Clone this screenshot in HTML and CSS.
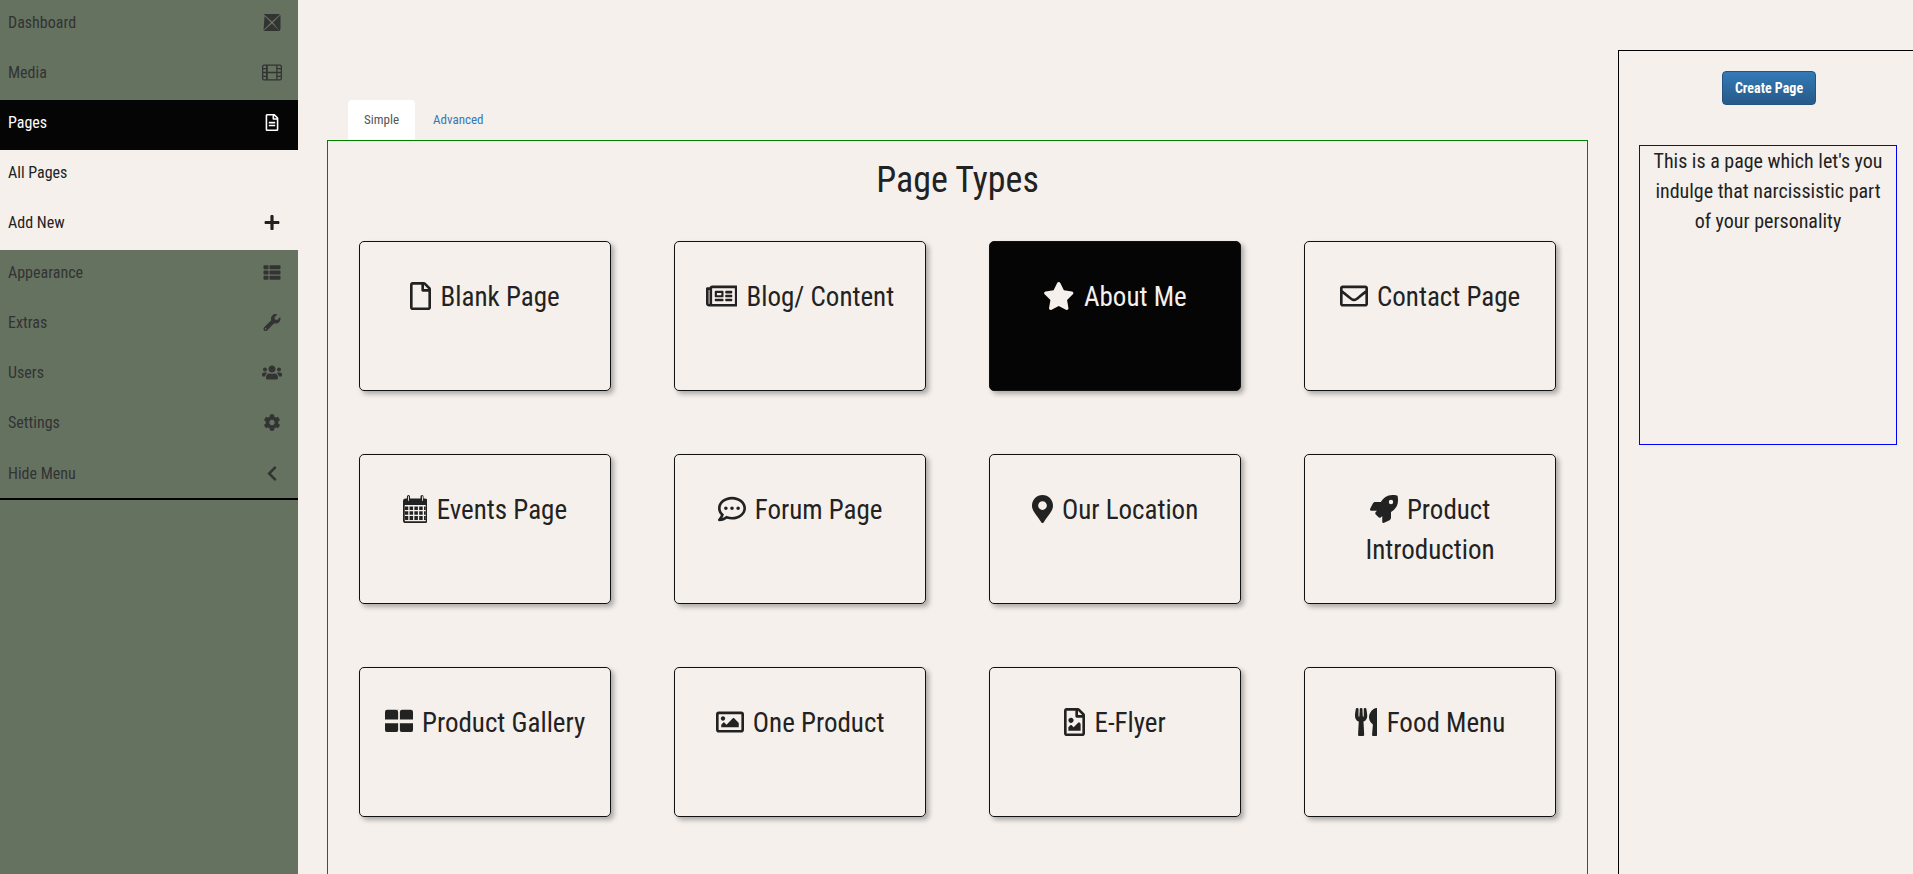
FILE: index.html
```html
<!DOCTYPE html>
<html lang="en">
<head>
    <meta charset="UTF-8">
    <title>Page Types</title>
    <link rel="stylesheet" href="styles.css">
</head>
<body>
    <!-- Side menu -->
    <nav class="sidebar">
        <a class="menu-item">Dashboard
            <svg class="menu-icon" viewBox="0 0 16 16"><path d="M0 0L8 7L15 1V0zM16 1L9 8L15 16L16 14zM15 16L8 9L0 16zM0 15L7 8L1 2z"/></svg>
        </a>
        <a class="menu-item">Media
            <svg class="menu-icon wide" viewBox="0 0 20 16"><path d="M2 0h16a2 2 0 0 1 2 2v12a2 2 0 0 1-2 2H2a2 2 0 0 1-2-2V2a2 2 0 0 1 2-2zm0 1.300a.7.7 0 0 0-.7.7v1.400H4V1.300zm3.800 0v6h8.400v-6zm9.700 0v2.100h3.200V2a.7.7 0 0 0-.7-.7zM1.300 4.700v2.600H4V4.700zm14.200 0v2.600h3.200V4.700zM1.300 8.700v2.600H4V8.700zm4.500 0v6h8.400v-6zm9.700 0v2.600h3.200V8.700zm-14.200 3.900V14a.7.7 0 0 0 .7.7h2v-2.100zm14.200 0v2.100H18a.7.7 0 0 0 .7-.7v-1.400z"/></svg>
        </a>
        <a class="menu-item active">Pages
            <svg class="menu-icon" viewBox="0 0 384 512"><path d="M288 248v28c0 6.600-5.400 12-12 12H108c-6.600 0-12-5.400-12-12v-28c0-6.600 5.400-12 12-12h168c6.600 0 12 5.400 12 12zm-12 72H108c-6.600 0-12 5.400-12 12v28c0 6.600 5.400 12 12 12h168c6.600 0 12-5.400 12-12v-28c0-6.600-5.400-12-12-12zm108-188.100V464c0 26.500-21.500 48-48 48H48c-26.500 0-48-21.500-48-48V48C0 21.500 21.500 0 48 0h204.100C264.800 0 277 5.100 286 14.100L369.900 98c9 8.900 14.100 21.200 14.100 33.900zm-128-80V128h76.100L256 51.900zM336 464V176H232c-13.300 0-24-10.700-24-24V48H48v416h288z"/></svg>
        </a>
        <a class="menu-item sub">All Pages</a>
        <a class="menu-item sub">Add New
            <svg class="menu-icon" viewBox="0 0 448 512"><path d="M416 208H272V64c0-17.670-14.330-32-32-32h-32c-17.670 0-32 14.330-32 32v144H32c-17.670 0-32 14.330-32 32v32c0 17.670 14.330 32 32 32h144v144c0 17.670 14.330 32 32 32h32c17.670 0 32-14.330 32-32V304h144c17.670 0 32-14.330 32-32v-32c0-17.670-14.330-32-32-32z"/></svg>
        </a>
        <a class="menu-item">Appearance
            <svg class="menu-icon wide" viewBox="0 0 512 512"><path d="M0 60a20 20 0 0 1 20-20h110a20 20 0 0 1 20 20v76a20 20 0 0 1-20 20H20a20 20 0 0 1-20-20zm180 0a20 20 0 0 1 20-20h292a20 20 0 0 1 20 20v76a20 20 0 0 1-20 20H200a20 20 0 0 1-20-20zM0 218a20 20 0 0 1 20-20h110a20 20 0 0 1 20 20v76a20 20 0 0 1-20 20H20a20 20 0 0 1-20-20zm180 0a20 20 0 0 1 20-20h292a20 20 0 0 1 20 20v76a20 20 0 0 1-20 20H200a20 20 0 0 1-20-20zM0 376a20 20 0 0 1 20-20h110a20 20 0 0 1 20 20v76a20 20 0 0 1-20 20H20a20 20 0 0 1-20-20zm180 0a20 20 0 0 1 20-20h292a20 20 0 0 1 20 20v76a20 20 0 0 1-20 20H200a20 20 0 0 1-20-20z"/></svg>
        </a>
        <a class="menu-item">Extras
            <svg class="menu-icon" viewBox="0 0 512 512"><path d="M507.730 109.100c-2.240-9.030-13.540-12.090-20.120-5.510l-74.360 74.360-67.880-11.310-11.310-67.880 74.360-74.360c6.620-6.620 3.430-17.900-5.660-20.160-47.380-11.740-99.550.91-136.580 37.930-39.640 39.640-50.550 97.100-34.050 147.200L18.740 402.760c-24.990 24.990-24.990 65.510 0 90.500 24.990 24.990 65.510 24.990 90.500 0l213.210-213.210c50.120 16.710 107.470 5.680 147.370-34.220 37.070-37.070 49.700-89.320 37.910-136.730zM64 472c-13.250 0-24-10.750-24-24 0-13.260 10.750-24 24-24s24 10.740 24 24c0 13.250-10.750 24-24 24z"/></svg>
        </a>
        <a class="menu-item">Users
            <svg class="menu-icon wide" viewBox="0 0 640 512"><path d="M96 224c35.300 0 64-28.700 64-64s-28.700-64-64-64-64 28.700-64 64 28.700 64 64 64zm448 0c35.300 0 64-28.700 64-64s-28.700-64-64-64-64 28.700-64 64 28.700 64 64 64zm32 32h-64c-17.600 0-33.500 7.100-45.100 18.600 40.300 22.100 68.900 62 75.100 109.400h66c17.700 0 32-14.300 32-32v-32c0-35.300-28.700-64-64-64zm-256 0c61.900 0 112-50.100 112-112S381.900 32 320 32 208 82.100 208 144s50.100 112 112 112zm76.800 32h-8.300c-20.800 10-43.900 16-68.500 16s-47.600-6-68.500-16h-8.300C179.600 288 128 339.600 128 403.200V432c0 26.500 21.500 48 48 48h288c26.500 0 48-21.500 48-48v-28.800c0-63.600-51.600-115.200-115.200-115.200zm-223.700-13.400C161.500 263.100 145.600 256 128 256H64c-35.300 0-64 28.700-64 64v32c0 17.700 14.300 32 32 32h65.900c6.300-47.400 34.900-87.300 75.200-109.400z"/></svg>
        </a>
        <a class="menu-item">Settings
            <svg class="menu-icon" viewBox="0 0 512 512"><path d="M487.400 315.700l-42.600-24.600c4.300-23.200 4.300-47 0-70.200l42.600-24.600c4.900-2.800 7.100-8.600 5.500-14-11.100-35.600-30-67.800-54.700-94.600-3.800-4.100-10-5.100-14.800-2.300L380.800 110c-17.900-15.400-38.500-27.300-60.800-35.100V25.800c0-5.600-3.900-10.500-9.400-11.700-36.700-8.200-74.300-7.800-109.200 0-5.500 1.200-9.400 6.100-9.400 11.700V75c-22.200 7.900-42.800 19.800-60.800 35.100L88.700 85.500c-4.900-2.800-11-1.900-14.800 2.300-24.700 26.700-43.600 58.900-54.700 94.600-1.700 5.400.6 11.200 5.500 14L67.300 221c-4.300 23.200-4.300 47 0 70.200l-42.600 24.600c-4.900 2.800-7.100 8.600-5.500 14 11.100 35.600 30 67.800 54.700 94.600 3.800 4.100 10 5.100 14.800 2.300l42.600-24.600c17.900 15.400 38.500 27.300 60.800 35.100v49.200c0 5.600 3.900 10.500 9.400 11.700 36.700 8.200 74.300 7.800 109.200 0 5.500-1.200 9.400-6.100 9.400-11.700v-49.200c22.200-7.900 42.800-19.800 60.800-35.100l42.600 24.600c4.900 2.800 11 1.900 14.800-2.300 24.700-26.700 43.600-58.900 54.700-94.600 1.500-5.500-.7-11.300-5.600-14.100zM256 336c-44.100 0-80-35.900-80-80s35.900-80 80-80 80 35.900 80 80-35.900 80-80 80z"/></svg>
        </a>
        <a class="menu-item last">Hide Menu
            <svg class="menu-icon" viewBox="0 0 320 512"><path d="M34.520 239.030L228.870 44.690c9.370-9.370 24.570-9.370 33.940 0l22.670 22.670c9.360 9.360 9.370 24.520.04 33.900L131.490 256l154.020 154.750c9.340 9.380 9.320 24.540-.04 33.900l-22.670 22.670c-9.370 9.370-24.570 9.370-33.940 0L34.520 272.970c-9.370-9.370-9.370-24.570 0-33.940z"/></svg>
        </a>
    </nav>

    <!-- Page types -->
    <main class="main">
        <ul class="tabs">
            <li class="tab active">Simple</li>
            <li class="tab">Advanced</li>
        </ul>
        <section class="panel">
            <h2 class="panel-title">Page Types</h2>
            <div class="type-grid">
                <div class="type-card"><svg class="type-icon" viewBox="0 0 384 512"><path d="M369.900 97.900L286 14C277 5 264.800-.1 252.100-.1H48C21.500 0 0 21.500 0 48v416c0 26.500 21.500 48 48 48h288c26.500 0 48-21.500 48-48V131.900c0-12.700-5.100-25-14.100-34zM332.100 128H256V51.900l76.100 76.100zM48 464V48h160v104c0 13.300 10.700 24 24 24h104v288H48z"/></svg> Blank Page</div>
                <div class="type-card"><svg class="type-icon" viewBox="0 0 576 512"><path d="M552 64H112c-20.858 0-38.643 13.377-45.248 32H24c-13.255 0-24 10.745-24 24v272c0 30.928 25.072 56 56 56h496c13.255 0 24-10.745 24-24V88c0-13.255-10.745-24-24-24zM48 392V144h16v248c0 4.411-3.589 8-8 8s-8-3.589-8-8zm480 8H111.422c.374-2.614.578-5.283.578-8V112h416v288zM172 280h136c6.627 0 12-5.373 12-12v-96c0-6.627-5.373-12-12-12H172c-6.627 0-12 5.373-12 12v96c0 6.627 5.373 12 12 12zm28-80h80v40h-80v-40zm-40 140v-24c0-6.627 5.373-12 12-12h136c6.627 0 12 5.373 12 12v24c0 6.627-5.373 12-12 12H172c-6.627 0-12-5.373-12-12zm192 0v-24c0-6.627 5.373-12 12-12h104c6.627 0 12 5.373 12 12v24c0 6.627-5.373 12-12 12H364c-6.627 0-12-5.373-12-12zm0-144v-24c0-6.627 5.373-12 12-12h104c6.627 0 12 5.373 12 12v24c0 6.627-5.373 12-12 12H364c-6.627 0-12-5.373-12-12zm0 72v-24c0-6.627 5.373-12 12-12h104c6.627 0 12 5.373 12 12v24c0 6.627-5.373 12-12 12H364c-6.627 0-12-5.373-12-12z"/></svg> Blog/ Content</div>
                <div class="type-card selected"><svg class="type-icon" viewBox="0 0 576 512"><path d="M259.300 17.800L194 150.200 47.900 171.500c-26.200 3.800-36.700 36.100-17.700 54.600l105.700 103-25 145.500c-4.500 26.300 23.200 46 46.400 33.700L288 439.600l130.700 68.700c23.200 12.200 50.900-7.400 46.400-33.700l-25-145.500 105.700-103c19-18.500 8.500-50.800-17.700-54.600L382 150.200 316.700 17.800c-11.700-23.600-45.600-23.900-57.400 0z"/></svg> About Me</div>
                <div class="type-card"><svg class="type-icon" viewBox="0 0 512 512"><path d="M464 64H48C21.490 64 0 85.490 0 112v288c0 26.510 21.490 48 48 48h416c26.510 0 48-21.490 48-48V112c0-26.510-21.490-48-48-48zm0 48v40.805c-22.422 18.259-58.168 46.651-134.587 106.490-16.841 13.247-50.201 45.072-73.413 44.701-23.208.375-56.579-31.459-73.413-44.701C106.180 199.465 70.425 171.067 48 152.805V112h416zM48 400V214.398c22.914 18.251 55.409 43.862 104.938 82.646 21.857 17.205 60.134 55.186 103.062 54.955 42.717.231 80.509-37.199 103.053-54.947 49.528-38.783 82.032-64.401 104.947-82.653V400H48z"/></svg> Contact Page</div>

                <div class="type-card"><svg class="type-icon" viewBox="0 0 448 512"><path d="M100 0a28 28 0 0 1 28 28v36h192V28a28 28 0 0 1 56 0v36h24a48 48 0 0 1 48 48v352a48 48 0 0 1-48 48H48a48 48 0 0 1-48-48V112a48 48 0 0 1 48-48h24V28a28 28 0 0 1 28-28zm-8 28v72a8 8 0 0 0 16 0V28a8 8 0 0 0-16 0zm256 0v72a8 8 0 0 0 16 0V28a8 8 0 0 0-16 0zM32 184v280a16 16 0 0 0 16 16h352a16 16 0 0 0 16-16V184zm40 24h24v64H36v-64zm48 0h64v64h-64zm88 0h64v64h-64zm88 0h64v64h-64zm88 0h36v64h-36zM36 296h60v64H36zm84 0h64v64h-64zm88 0h64v64h-64zm88 0h64v64h-64zm88 0h36v64h-36zM36 384h60v72H48a12 12 0 0 1-12-12zm84 0h64v72h-64zm88 0h64v72h-64zm88 0h64v72h-64zm88 0h36v60a12 12 0 0 1-12 12h-24z" fill-rule="evenodd"/></svg> Events Page</div>
                <div class="type-card"><svg class="type-icon" viewBox="0 0 512 512"><path d="M144 208c-17.700 0-32 14.300-32 32s14.300 32 32 32 32-14.300 32-32-14.300-32-32-32zm112 0c-17.700 0-32 14.300-32 32s14.300 32 32 32 32-14.300 32-32-14.300-32-32-32zm112 0c-17.700 0-32 14.300-32 32s14.300 32 32 32 32-14.300 32-32-14.300-32-32-32zM256 32C114.600 32 0 125.100 0 240c0 47.600 19.900 91.200 52.900 126.300C38 405.700 7 439.100 6.500 439.500c-6.600 7-8.400 17.200-4.600 26S14.400 480 24 480c61.500 0 110-25.700 139.100-46.300C192 442.800 223.200 448 256 448c141.400 0 256-93.100 256-208S397.400 32 256 32zm0 368c-26.700 0-53.100-4.100-78.400-12.100l-22.700-7.200-19.500 13.800c-14.300 10.100-33.900 21.400-57.500 29 7.300-12.100 14.400-25.700 19.900-40.200l10.600-28.100-20.600-21.800C69.700 314.100 48 282.200 48 240c0-88.200 93.300-160 208-160s208 71.800 208 160-93.300 160-208 160z"/></svg> Forum Page</div>
                <div class="type-card"><svg class="type-icon" viewBox="0 0 384 512"><path d="M172.268 501.670C26.970 291.031 0 269.413 0 192 0 85.961 85.961 0 192 0s192 85.961 192 192c0 77.413-26.970 99.031-172.268 309.670-9.535 13.774-29.930 13.773-39.464 0zM192 272c44.183 0 80-35.817 80-80s-35.817-80-80-80-80 35.817-80 80 35.817 80 80 80z"/></svg> Our Location</div>
                <div class="type-card"><svg class="type-icon" viewBox="0 0 512 512"><path d="M505.120 19.094c-1.189-5.531-6.658-11-12.207-12.188C460.716 0 435.507 0 410.407 0 307.175 0 245.269 55.203 199.052 128H94.838c-16.348.016-35.557 11.875-42.887 26.484L2.516 253.297A28.400 28.400 0 0 0 0 264a24.009 24.009 0 0 0 24.006 24h103.810l-22.475 22.469c-11.365 11.361-12.996 32.258 0 45.250l50.904 50.906c11.156 11.188 32.156 13.156 45.277 0l22.475-22.469V488a24.009 24.009 0 0 0 24.006 24 28.559 28.559 0 0 0 10.707-2.516l98.728-49.391c14.629-7.297 26.508-26.500 26.508-42.859V312.797c72.598-46.313 128.035-108.406 128.035-211.094C512.075 76.500 512.075 51.297 505.120 19.094zM384.040 168a40 40 0 1 1 40.010-40 40.023 40.023 0 0 1-40.010 40z"/></svg> Product Introduction</div>

                <div class="type-card"><svg class="type-icon" viewBox="0 0 512 512"><path d="M40 32h176a40 40 0 0 1 40 0v0H40zM0 72a40 40 0 0 1 40-40h160a40 40 0 0 1 40 40v136H0zm272 0a40 40 0 0 1 40-40h160a40 40 0 0 1 40 40v136H272zM0 280h240v120a40 40 0 0 1-40 40H40a40 40 0 0 1-40-40zm272 0h240v120a40 40 0 0 1-40 40H312a40 40 0 0 1-40-40z"/></svg> Product Gallery</div>
                <div class="type-card"><svg class="type-icon" viewBox="0 0 512 512"><path d="M464 64H48C21.490 64 0 85.490 0 112v288c0 26.510 21.490 48 48 48h416c26.510 0 48-21.490 48-48V112c0-26.510-21.490-48-48-48zm-6 336H54a6 6 0 0 1-6-6V118a6 6 0 0 1 6-6h404a6 6 0 0 1 6 6v276a6 6 0 0 1-6 6zM128 152c-22.091 0-40 17.909-40 40s17.909 40 40 40 40-17.909 40-40-17.909-40-40-40zM96 352h320v-80l-87.515-87.515c-4.686-4.686-12.284-4.686-16.971 0L192 304l-39.515-39.515c-4.686-4.686-12.284-4.686-16.971 0L96 304v48z"/></svg> One Product</div>
                <div class="type-card"><svg class="type-icon" viewBox="0 0 384 512"><path d="M369.900 97.900L286 14C277 5 264.800-.1 252.100-.1H48C21.500 0 0 21.500 0 48v416c0 26.500 21.500 48 48 48h288c26.500 0 48-21.500 48-48V131.900c0-12.700-5.100-25-14.100-34zM332.100 128H256V51.900l76.100 76.100zM48 464V48h160v104c0 13.300 10.700 24 24 24h104v288H48zm32-48h224V288l-23.500-23.500c-4.700-4.700-12.300-4.700-17 0L176 352l-39.500-39.500c-4.700-4.700-12.300-4.700-17 0L80 352v64zm48-240c-26.500 0-48 21.500-48 48s21.500 48 48 48 48-21.500 48-48-21.500-48-48-48z"/></svg> E-Flyer</div>
                <div class="type-card"><svg class="type-icon" viewBox="0 0 416 512"><path d="M207.900 15.200c.8 4.700 16.100 94.500 16.100 128.800 0 52.300-27.800 89.600-68.900 104.600L168 486.700c.7 13.700-10.200 25.300-24 25.300H80c-13.700 0-24.700-11.500-24-25.300l12.900-238.100C27.700 233.600 0 196.200 0 144 0 109.600 15.300 19.900 16.100 15.200 19.300-5.100 61.400-5.400 64 16.300v141.200c1.300 3.400 15.100 3.200 16 0 1.400-25.300 7.900-139.200 8-141.800 3.300-20.800 44.700-20.800 47.900 0 .2 2.700 6.600 116.500 8 141.800.9 3.200 14.800 3.400 16 0V16.300c2.600-21.600 44.800-21.400 48-1.100zm119.200 285.700l-15 185.100c-1.200 14 9.900 26 23.900 26h56c13.300 0 24-10.700 24-24V24c0-13.200-10.700-24-24-24-82.500 0-221.400 178.500-64.900 300.900z"/></svg> Food Menu</div>
            </div>
        </section>
    </main>

    <!-- Create page column -->
    <aside class="aside">
        <button class="create-btn">Create Page</button>
        <div class="type-info">This is a page which let's you indulge that narcissistic part of your personality</div>
    </aside>
</body>
</html>
```

FILE: styles.css
```css
/* Page */
body {
    margin: 0;
    height: 874px;
    overflow: hidden;
    display: flex;
    background-color: #f5f0ec;
    color: #222;
    font-family: "Roboto Condensed", Roboto, sans-serif;
    font-stretch: 75%;
}

/* Side menu */
.sidebar {
    width: 298px;
    flex-shrink: 0;
    background-color: #657260;
}

.menu-item {
    display: flex;
    justify-content: space-between;
    align-items: center;
    box-sizing: border-box;
    height: 50px;
    padding: 0 16px 6px 8px;
    font-size: 16px;
    color: #333;
}

.menu-item.active {
    background-color: #050505;
    color: #fff;
}

.menu-item.sub {
    background-color: #f5f0ec;
    color: #222;
}

.menu-item.last {
    border-bottom: 2px solid #000;
    padding-bottom: 2px;
}

.menu-icon {
    display: block;
    width: 20px;
    height: 17px;
    fill: currentColor;
}

/* Tabs and panel */
.main {
    flex: 1;
    padding: 100px 30px 0 29px;
}

.tabs {
    display: flex;
    gap: 2px;
    list-style: none;
    margin: 0 0 0 21px;
    padding: 0;
}

.tab {
    height: 40px;
    line-height: 40px;
    padding: 0 16px;
    font-size: 13px;
    color: #337ab7;
}

.tab.active {
    background-color: #fff;
    border-radius: 4px 4px 0 0;
    color: #555;
}

.panel {
    border: 1px solid green;
    height: 900px;
}

.panel-title {
    margin: 0;
    padding: 19px 0 41px;
    text-align: center;
    font-size: 36px;
    line-height: 40px;
    font-weight: 400;
}

.type-grid {
    display: grid;
    grid-template-columns: repeat(4, 252px);
    gap: 63px;
    justify-content: center;
}

.type-card {
    box-sizing: border-box;
    height: 150px;
    padding: 35px 10px 0;
    border: 1px solid #111;
    border-radius: 5px;
    box-shadow: 3px 3px 5px rgba(0, 0, 0, 0.3);
    text-align: center;
    font-size: 27px;
    line-height: 40px;
}

.type-card.selected {
    background-color: #050505;
    color: #f5f0ec;
}

.type-icon {
    width: auto;
    height: 28px;
    margin-right: 3px;
    vertical-align: -4px;
    fill: currentColor;
}

/* Right column */
.aside {
    width: 295px;
    flex-shrink: 0;
    box-sizing: border-box;
    margin-top: 50px;
    padding: 20px 0 0 20px;
    border-left: 1px solid #000;
    border-top: 1px solid #000;
    text-align: center;
}

.create-btn {
    display: block;
    width: 94px;
    height: 34px;
    margin: 0 0 40px 83px;
    border: 1px solid #245580;
    border-radius: 4px;
    background-image: linear-gradient(to bottom, #337ab7, #265a88);
    color: #fff;
    font-family: inherit;
    font-stretch: inherit;
    font-size: 14px;
    font-weight: 700;
}

.type-info {
    box-sizing: border-box;
    width: 258px;
    height: 300px;
    padding: 0 5px;
    border: 1px solid blue;
    font-size: 20px;
    line-height: 30px;
}
```
